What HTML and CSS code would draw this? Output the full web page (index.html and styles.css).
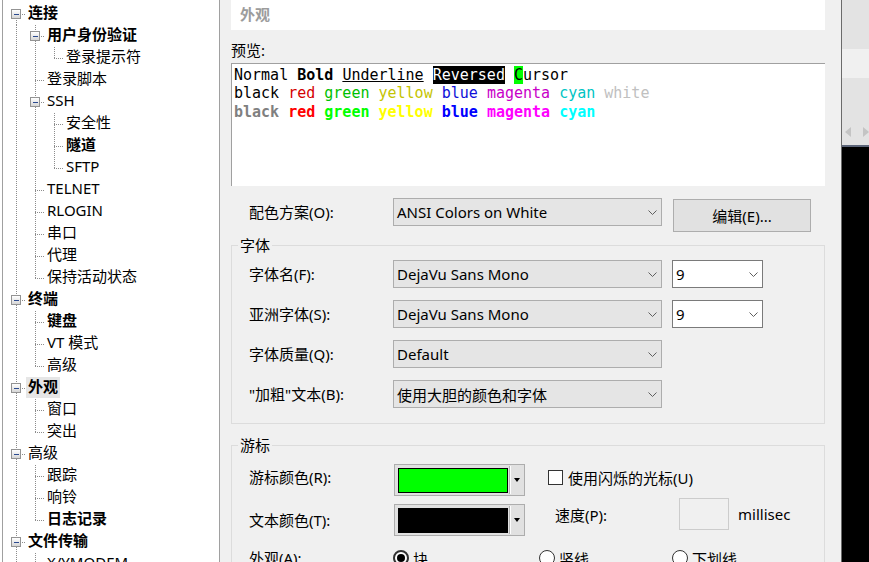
FILE: index.html
```html
<!DOCTYPE html>
<html lang="zh-CN">
<head>
<meta charset="utf-8">
<title>外观</title>
<link rel="stylesheet" href="styles.css">
</head>
<body>
<div class="app">
  <nav class="tree-wrap">
    <div class="tree">
      <div class="row"><span class="f"><span class="box"></span></span><span class="lbl b">连接</span></div>
      <div class="row"><span class="g"></span><span class="t"><span class="box"></span></span><span class="lbl b">用户身份验证</span></div>
      <div class="row"><span class="g"></span><span class="g"></span><span class="l"></span><span class="lbl">登录提示符</span></div>
      <div class="row"><span class="g"></span><span class="t"></span><span class="lbl">登录脚本</span></div>
      <div class="row"><span class="g"></span><span class="t"><span class="box"></span></span><span class="lbl">SSH</span></div>
      <div class="row"><span class="g"></span><span class="g"></span><span class="t"></span><span class="lbl">安全性</span></div>
      <div class="row"><span class="g"></span><span class="g"></span><span class="t"></span><span class="lbl b">隧道</span></div>
      <div class="row"><span class="g"></span><span class="g"></span><span class="l"></span><span class="lbl">SFTP</span></div>
      <div class="row"><span class="g"></span><span class="t"></span><span class="lbl">TELNET</span></div>
      <div class="row"><span class="g"></span><span class="t"></span><span class="lbl">RLOGIN</span></div>
      <div class="row"><span class="g"></span><span class="t"></span><span class="lbl">串口</span></div>
      <div class="row"><span class="g"></span><span class="t"></span><span class="lbl">代理</span></div>
      <div class="row"><span class="g"></span><span class="l"></span><span class="lbl">保持活动状态</span></div>
      <div class="row"><span class="t"><span class="box"></span></span><span class="lbl b">终端</span></div>
      <div class="row"><span class="g"></span><span class="t"></span><span class="lbl b">键盘</span></div>
      <div class="row"><span class="g"></span><span class="t"></span><span class="lbl">VT 模式</span></div>
      <div class="row"><span class="g"></span><span class="l"></span><span class="lbl">高级</span></div>
      <div class="row"><span class="t"><span class="box"></span></span><span class="lbl b sel">外观</span></div>
      <div class="row"><span class="g"></span><span class="t"></span><span class="lbl">窗口</span></div>
      <div class="row"><span class="g"></span><span class="l"></span><span class="lbl">突出</span></div>
      <div class="row"><span class="t"><span class="box"></span></span><span class="lbl">高级</span></div>
      <div class="row"><span class="g"></span><span class="t"></span><span class="lbl">跟踪</span></div>
      <div class="row"><span class="g"></span><span class="t"></span><span class="lbl">响铃</span></div>
      <div class="row"><span class="g"></span><span class="l"></span><span class="lbl b">日志记录</span></div>
      <div class="row"><span class="t"><span class="box"></span></span><span class="lbl b">文件传输</span></div>
      <div class="row"><span class="g"></span><span class="t"></span><span class="lbl">X/YMODEM</span></div>
    </div>
  </nav>

  <main class="panel">
    <div class="hdr">外观</div>
    <div class="caption">预览:</div>
    <div class="preview">Normal <b>Bold</b> <u>Underline</u> <span class="rev">Reversed</span> <span class="cur">C</span>ursor
<span class="c-k">black</span> <span class="c-r">red</span> <span class="c-g">green</span> <span class="c-y">yellow</span> <span class="c-b">blue</span> <span class="c-m">magenta</span> <span class="c-c">cyan</span> <span class="c-w">white</span>
<b class="cb-k">black</b> <b class="cb-r">red</b> <b class="cb-g">green</b> <b class="cb-y">yellow</b> <b class="cb-b">blue</b> <b class="cb-m">magenta</b> <b class="cb-c">cyan</b></div>

    <div class="scheme-row">
      <span class="flabel">配色方案(O):</span>
      <div class="combo wide"><span>ANSI Colors on White</span><svg class="chev" width="9" height="5" viewBox="0 0 9 5"><polyline points="0.5,0.5 4.5,4.5 8.5,0.5" fill="none" stroke="#5f5f5f" stroke-width="1"/></svg></div>
      <div class="btn">编辑(E)...</div>
    </div>

    <section class="group font-group">
      <h3 class="gtitle">字体</h3>
      <div class="frow first">
        <span class="flabel">字体名(F):</span>
        <div class="combo wide"><span>DejaVu Sans Mono</span><svg class="chev" width="9" height="5" viewBox="0 0 9 5"><polyline points="0.5,0.5 4.5,4.5 8.5,0.5" fill="none" stroke="#5f5f5f" stroke-width="1"/></svg></div>
        <div class="combo size"><span>9</span><svg class="chev" width="9" height="5" viewBox="0 0 9 5"><polyline points="0.5,0.5 4.5,4.5 8.5,0.5" fill="none" stroke="#5f5f5f" stroke-width="1"/></svg></div>
      </div>
      <div class="frow">
        <span class="flabel">亚洲字体(S):</span>
        <div class="combo wide"><span>DejaVu Sans Mono</span><svg class="chev" width="9" height="5" viewBox="0 0 9 5"><polyline points="0.5,0.5 4.5,4.5 8.5,0.5" fill="none" stroke="#5f5f5f" stroke-width="1"/></svg></div>
        <div class="combo size"><span>9</span><svg class="chev" width="9" height="5" viewBox="0 0 9 5"><polyline points="0.5,0.5 4.5,4.5 8.5,0.5" fill="none" stroke="#5f5f5f" stroke-width="1"/></svg></div>
      </div>
      <div class="frow">
        <span class="flabel">字体质量(Q):</span>
        <div class="combo wide"><span>Default</span><svg class="chev" width="9" height="5" viewBox="0 0 9 5"><polyline points="0.5,0.5 4.5,4.5 8.5,0.5" fill="none" stroke="#5f5f5f" stroke-width="1"/></svg></div>
      </div>
      <div class="frow">
        <span class="flabel">"加粗"文本(B):</span>
        <div class="combo wide"><span>使用大胆的颜色和字体</span><svg class="chev" width="9" height="5" viewBox="0 0 9 5"><polyline points="0.5,0.5 4.5,4.5 8.5,0.5" fill="none" stroke="#5f5f5f" stroke-width="1"/></svg></div>
      </div>
    </section>

    <section class="group cursor-group">
      <h3 class="gtitle">游标</h3>
      <div class="cursor-top">
        <div class="colors">
          <div class="crow">
            <span class="flabel clabel up">游标颜色(R):</span>
            <div class="picker"><span class="swatch green"></span><span class="sep"></span><span class="tri"></span></div>
          </div>
          <div class="crow">
            <span class="flabel clabel">文本颜色(T):</span>
            <div class="picker"><span class="swatch black"></span><span class="sep"></span><span class="tri"></span></div>
          </div>
        </div>
        <div class="blink">
          <label class="check"><span class="cbox"></span>使用闪烁的光标(U)</label>
          <div class="speed">
            <span class="slabel">速度(P):</span>
            <span class="sinput"></span>
            <span class="unit">millisec</span>
          </div>
        </div>
      </div>
      <div class="rrow">
        <span class="flabel clabel">外观(A):</span>
        <span class="opt o1"><span class="radio on"></span>块</span>
        <span class="opt o2"><span class="radio"></span>竖线</span>
        <span class="opt"><span class="radio"></span>下划线</span>
      </div>
    </section>
  </main>

  <div class="side">
    <div class="s1"></div>
    <div class="s2"></div>
    <div class="s3"><span class="al"></span><span class="ar"></span></div>
    <div class="s4"></div>
    <div class="s5"></div>
  </div>
</div>
</body>
</html>
```

FILE: styles.css
```css
* { box-sizing: border-box; }
html, body { margin: 0; padding: 0; }
body {
  width: 869px;
  height: 562px;
  overflow: hidden;
  background: #f0f0f0;
  font-family: "Noto Sans", "Noto Sans CJK SC", sans-serif;
  font-size: 15px;
  color: #000;
}
.app { display: flex; height: 562px; }

/* ---------- tree ---------- */
.tree-wrap {
  width: 220px;
  flex: none;
  background: #fff;
  padding-left: 2px;
  border-right: 1px solid #a0a0a0;
}
.tree {
  height: 100%;
  border-left: 1px solid #a0a0a0;
  padding: 3px 0 0 4px;
}
.row { display: flex; height: 22px; }
.g, .t, .l, .f { display: block; width: 19px; flex: none; }
.g {
  background: repeating-linear-gradient(to bottom, #8c8c8c 0 1px, transparent 1px 2px) 9px 0 / 1px 100% no-repeat;
}
.t {
  background:
    repeating-linear-gradient(to bottom, #8c8c8c 0 1px, transparent 1px 2px) 9px 0 / 1px 100% no-repeat,
    repeating-linear-gradient(to right, #8c8c8c 0 1px, transparent 1px 2px) 9px 11px / 10px 1px no-repeat;
}
.l {
  background:
    repeating-linear-gradient(to bottom, #8c8c8c 0 1px, transparent 1px 2px) 9px 0 / 1px 12px no-repeat,
    repeating-linear-gradient(to right, #8c8c8c 0 1px, transparent 1px 2px) 9px 11px / 10px 1px no-repeat;
}
.f {
  background:
    repeating-linear-gradient(to bottom, #8c8c8c 0 1px, transparent 1px 2px) 9px 11px / 1px 11px no-repeat,
    repeating-linear-gradient(to right, #8c8c8c 0 1px, transparent 1px 2px) 9px 11px / 10px 1px no-repeat;
}
.box {
  position: relative;
  display: block;
  width: 10px;
  height: 10px;
  margin: 6px 0 0 4px;
  border: 1px solid #939393;
  background: linear-gradient(#ffffff, #d6d6d6);
}
.box::after {
  content: "";
  position: absolute;
  left: 2px;
  top: 4px;
  width: 5px;
  height: 1px;
  background: #2c4b8f;
}
.lbl {
  height: 21px;
  line-height: 19px;
  padding: 0 2px;
  white-space: nowrap;
}
.b { font-weight: 700; }
.sel { background: #e6e6e6; }

/* ---------- main panel ---------- */
.panel {
  width: 622px;
  flex: none;
  padding: 0 16px 0 11px;
  border-right: 1px solid #6b6b6b;
}
.hdr {
  height: 30px;
  line-height: 28px;
  background: #fff;
  padding-left: 9px;
  font-weight: 700;
  color: #9c9c9c;
}
.caption {
  height: 20px;
  line-height: 20px;
  margin: 10px 0 3px;
}
.preview {
  height: 123px;
  background: #fff;
  border-top: 1px solid #a0a0a0;
  border-left: 1px solid #a0a0a0;
  padding: 1.5px 0 0 2px;
  font-family: "DejaVu Sans Mono", monospace;
  font-size: 15px;
  line-height: 18.5px;
  white-space: pre;
}
.preview u { text-decoration: underline; }
.rev { background: #000; color: #fff; }
.cur { background: #00ff00; color: #000; }
.c-k { color: #000; }
.c-r { color: #d40000; }
.c-g { color: #00c000; }
.c-y { color: #c4c400; }
.c-b { color: #1010d8; }
.c-m { color: #c800c8; }
.c-c { color: #00c4c4; }
.c-w { color: #c0c0c0; }
.cb-k { color: #808080; }
.cb-r { color: #ff0000; }
.cb-g { color: #00ff00; }
.cb-y { color: #ffff00; }
.cb-b { color: #0000ff; }
.cb-m { color: #ff00ff; }
.cb-c { color: #00ffff; }

.scheme-row {
  display: flex;
  align-items: flex-start;
  margin-top: 12px;
  padding-left: 18px;
}
.flabel {
  width: 144px;
  flex: none;
  height: 28px;
  line-height: 28px;
  white-space: nowrap;
}
.combo {
  height: 28px;
  border: 1px solid #adadad;
  background: #e5e5e5;
  display: flex;
  align-items: center;
  justify-content: space-between;
  padding: 0 4px 0 3px;
  white-space: nowrap;
}
.combo.wide { width: 269px; }
.combo.size {
  width: 91px;
  margin-left: 10px;
  background: #fff;
  border-color: #7a7a7a;
}
.chev { display: block; flex: none; }
.btn {
  width: 138px;
  height: 33px;
  margin: 1px 0 0 11px;
  border: 1px solid #adadad;
  background: #e1e1e1;
  display: flex;
  align-items: center;
  justify-content: center;
}

/* ---------- group boxes ---------- */
.group {
  border: 1px solid #dcdcdc;
  padding: 0 0 15px 17px;
}
.font-group { margin-top: 13px; }
.cursor-group { margin-top: 21px; padding-bottom: 0; }
.gtitle {
  margin: -11px 0 0 -11px;
  padding: 0 2px;
  width: fit-content;
  height: 20px;
  line-height: 20px;
  font-size: 15px;
  font-weight: 400;
  background: #f0f0f0;
}
.frow { display: flex; margin-top: 12px; }
.frow.first { margin-top: 5px; }

.cursor-top { display: flex; margin-top: 9px; }
.colors { display: flex; flex-direction: column; gap: 8px; }
.crow { display: flex; align-items: center; height: 32px; }
.clabel { width: 145px; }
.crow .clabel.up { align-self: flex-start; line-height: 26px; height: 26px; }
.picker {
  width: 131px;
  height: 32px;
  border: 1px solid #adadad;
  background: #e1e1e1;
  display: flex;
  align-items: center;
  padding-left: 3px;
}
.swatch {
  display: block;
  width: 110px;
  height: 25px;
  border: 1px solid #000;
}
.swatch.green { background: #00ff00; }
.swatch.black { background: #000; }
.sep {
  display: block;
  width: 2px;
  height: 28px;
  margin-left: 1px;
  border-left: 1px solid #b4b4b4;
  border-right: 1px solid #fdfdfd;
}
.tri {
  display: block;
  margin-left: 3px;
  width: 0;
  height: 0;
  border-left: 3.5px solid transparent;
  border-right: 3.5px solid transparent;
  border-top: 4px solid #000;
}
.blink { margin-left: 23px; }
.check {
  display: flex;
  align-items: center;
  height: 24px;
  margin-top: 1px;
  white-space: nowrap;
}
.cbox {
  width: 15px;
  height: 15px;
  border: 1px solid #333;
  background: #fff;
  margin-right: 5px;
}
.speed {
  display: flex;
  align-items: center;
  margin-top: 9px;
  height: 32px;
}
.slabel { width: 131px; padding-left: 7px; }
.sinput {
  width: 50px;
  height: 32px;
  border: 1px solid #cccccc;
  background: #f0f0f0;
}
.unit { margin-left: 9px; }
.rrow {
  display: flex;
  align-items: center;
  height: 28px;
  margin-top: 8px;
}
.rrow .clabel { width: 144px; }
.opt { display: flex; align-items: center; gap: 4px; white-space: nowrap; }
.o1 { width: 146px; }
.o2 { width: 133px; }
.radio {
  position: relative;
  width: 16px;
  height: 16px;
  border-radius: 50%;
  border: 1px solid #333;
  background: #fff;
}
.radio.on { border-width: 2px; }
.radio.on::after {
  content: "";
  position: absolute;
  left: 2px;
  top: 2px;
  width: 8px;
  height: 8px;
  border-radius: 50%;
  background: #000;
}

/* ---------- background window strip ---------- */
.side { flex: 1; display: flex; flex-direction: column; }
.s1 { height: 49px; background: #e3e3e3; }
.s2 { height: 29px; background: #f0f0f0; }
.s3 {
  height: 67px;
  background: #e3e3e3;
  display: flex;
  align-items: flex-end;
  justify-content: space-between;
  padding: 0 0 8px 3px;
}
.al {
  width: 0; height: 0;
  border-top: 5.5px solid transparent;
  border-bottom: 5.5px solid transparent;
  border-right: 6px solid #c4c4c4;
}
.ar {
  width: 0; height: 0;
  border-top: 5.5px solid transparent;
  border-bottom: 5.5px solid transparent;
  border-left: 6px solid #c4c4c4;
}
.s4 { height: 2px; background: #5c6579; }
.s5 { flex: 1; background: #000; }
```
